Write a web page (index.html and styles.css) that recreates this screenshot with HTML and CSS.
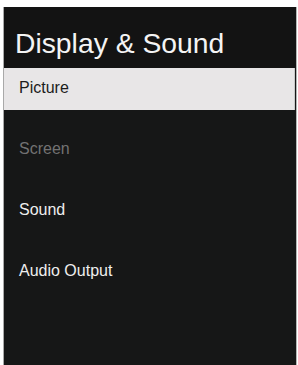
FILE: index.html
```html
<!DOCTYPE html>
<html lang="en">
<head>
    <meta charset="UTF-8">
    <meta name="viewport" content="width=device-width, initial-scale=1.0">
    <title>Display &amp; Sound</title>
    <link rel="stylesheet" href="styles.css">
</head>
<body>
    <div class="panel">
        <h1 class="title">Display &amp; Sound</h1>
        <ul class="menu">
            <li class="menu-item active">Picture</li>
            <li class="menu-item disabled">Screen</li>
            <li class="menu-item">Sound</li>
            <li class="menu-item">Audio Output</li>
        </ul>
    </div>
</body>
</html>
```

FILE: styles.css
```css
* {
    margin: 0;
    padding: 0;
    box-sizing: border-box;
    font-family: "Liberation Sans", Arial, sans-serif;
}

html, body {
    height: 100%;
}

body {
    background: #ffffff;
    padding: 7px 1px 0 3px;
    overflow: hidden;
}

.panel {
    height: 100%;
    background: #161717;
    border-left: 1px solid #a9a9a9;
    border-right: 1px solid #b5b5b5;
    display: flex;
    flex-direction: column;
}

.title {
    color: #f4f4f4;
    font-size: 28.3px;
    font-weight: normal;
    line-height: 32px;
    padding: 20px 0 9px 11px;
    background: #131313;
}

.menu {
    list-style: none;
    display: flex;
    flex-direction: column;
    gap: 19px;
}

.menu-item {
    height: 42px;
    line-height: 40px;
    padding-left: 15px;
    font-size: 16px;
    color: #eeeeee;
}

.menu-item.active {
    background: #e8e6e7;
    color: #1c1c1c;
    margin-right: 1px;
    border-right: 1px solid #c9c9c9;
}

.menu-item.disabled {
    color: #727272;
}
```
